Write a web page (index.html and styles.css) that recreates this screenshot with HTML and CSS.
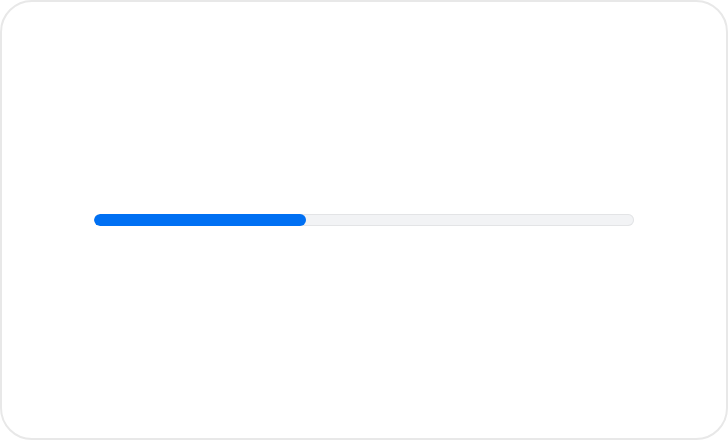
FILE: index.html
```html
<!DOCTYPE html>
<html lang="en">
<head>
    <meta charset="UTF-8">
    <meta name="viewport" content="width=device-width, initial-scale=1.0">
    <title>Progress</title>
    <link rel="stylesheet" href="styles.css">
</head>
<body>
    <div class="card">
        <div class="progress" role="progressbar" aria-valuenow="39" aria-valuemin="0" aria-valuemax="100">
            <div class="progress-fill" style="width: 39.3%;"></div>
        </div>
    </div>
</body>
</html>
```

FILE: styles.css
```css
* {
    margin: 0;
    padding: 0;
    box-sizing: border-box;
}
body {
    font-family: "Liberation Sans", Arial, sans-serif;
    background-color: #fff;
}
.card {
    width: 728px;
    height: 440px;
    border: 2px solid #e8e8e8;
    border-radius: 32px;
    background-color: #fff;
    display: flex;
    align-items: center;
    justify-content: center;
}
.progress {
    width: 540px;
    height: 12px;
    border-radius: 6px;
    background-color: #f2f3f5;
    box-shadow: inset 0 0 0 1px #e3e4e6;
    overflow: hidden;
}
.progress-fill {
    height: 100%;
    border-radius: 6px;
    background-color: #0070f3;
}
```
